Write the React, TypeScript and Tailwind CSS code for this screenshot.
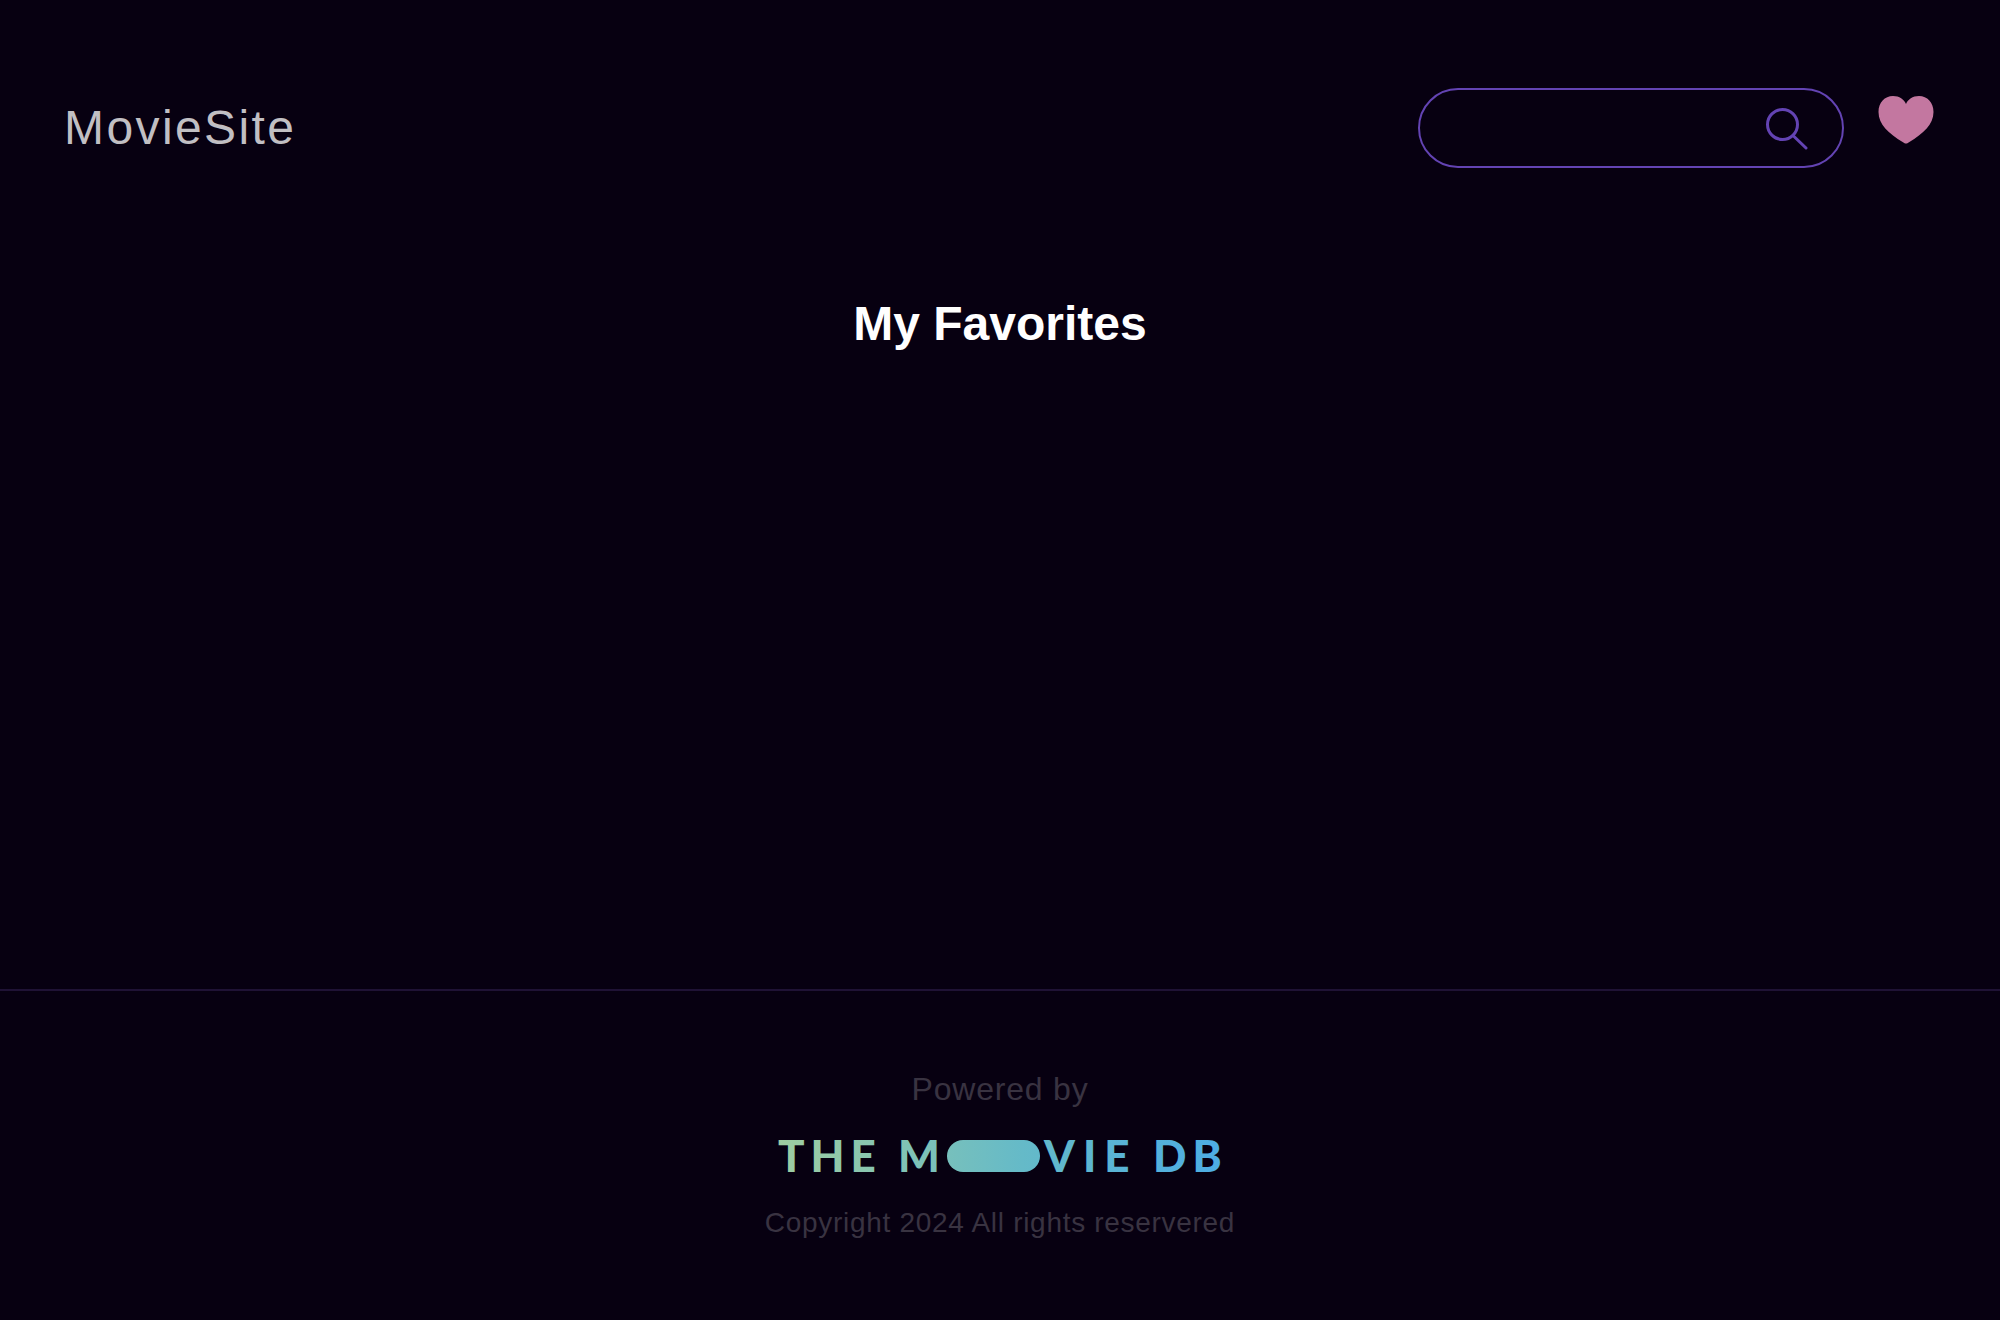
export default function App() {
  return (
    <div className="flex min-h-screen flex-col bg-[#070011] font-['Liberation_Sans',Arial,sans-serif] text-white">
      <header className="flex items-center justify-between px-16 pt-[88px]">
        <a href="#home" className="text-5xl tracking-wider text-[#c1bfc3]">
          MovieSite
        </a>
        <div className="flex items-start gap-8">
          <form role="search" className="flex h-20 w-[426px] items-center rounded-full border-2 border-[#6343b3] pr-[34px] pl-8">
            <input
              type="text"
              aria-label="Search movies"
              className="h-full min-w-0 flex-1 bg-transparent text-3xl outline-none"
            />
            <button type="button" aria-label="Search" className="shrink-0">
              <svg width="44" height="44" viewBox="0 0 44 44" fill="none" stroke="#6343b3" strokeWidth="3" strokeLinecap="round">
                <circle cx="18.5" cy="18.5" r="15" />
                <path d="M29.5 30 42 42" />
              </svg>
            </button>
          </form>
          <button type="button" aria-label="My favorites" className="mt-2">
            <svg width="60" height="48" viewBox="0 0 60 48" fill="#c377a0">
              <path d="M30 47.5C29 47.5 28.200 47 27 46.200C12.500 37.500 2.500 28.500 2.500 16C2.500 6.500 8.700 0 17 0C23.500 0 28 3.500 30 8C32 3.500 36.500 0 43 0C51.300 0 57.500 6.500 57.500 16C57.500 28.500 47.500 37.500 33 46.200C31.800 47 31 47.500 30 47.500Z" />
            </svg>
          </button>
        </div>
      </header>
      <main className="flex-1 px-16 pt-32">
        <h1 className="text-center text-5xl leading-[56px] font-bold">My Favorites</h1>
      </main>
      <footer className="flex flex-col items-center border-t-2 border-[#1f1235] pt-[74px] pb-[76px] text-[#393341]">
        <p className="text-[32px] leading-[48px] tracking-wide">Powered by</p>
        <a href="#tmdb" aria-label="The Movie DB" className="mt-[27px]">
          <svg width="444" height="32" viewBox="0 0 444 32" className="overflow-visible">
            <defs>
              <linearGradient id="brand" gradientUnits="userSpaceOnUse" x1="0" y1="0" x2="444" y2="0">
                <stop offset="0" stopColor="#9fcda1" />
                <stop offset="0.55" stopColor="#65bac8" />
                <stop offset="1" stopColor="#4dade4" />
              </linearGradient>
            </defs>
            <g fill="url(#brand)" className="font-['Lato',sans-serif] text-[44px] font-black tracking-[6px]">
              <text x="0" y="32">THE</text>
              <text x="120" y="32">M</text>
              <rect x="169" y="0" width="93" height="32" rx="16" />
              <text x="266" y="32" className="tracking-[8px]">VIE</text>
              <text x="375" y="32">DB</text>
            </g>
          </svg>
        </a>
        <p className="mt-[30px] text-[28px] leading-[42px] tracking-wide">Copyright 2024 All rights reservered</p>
      </footer>
    </div>
  );
}
